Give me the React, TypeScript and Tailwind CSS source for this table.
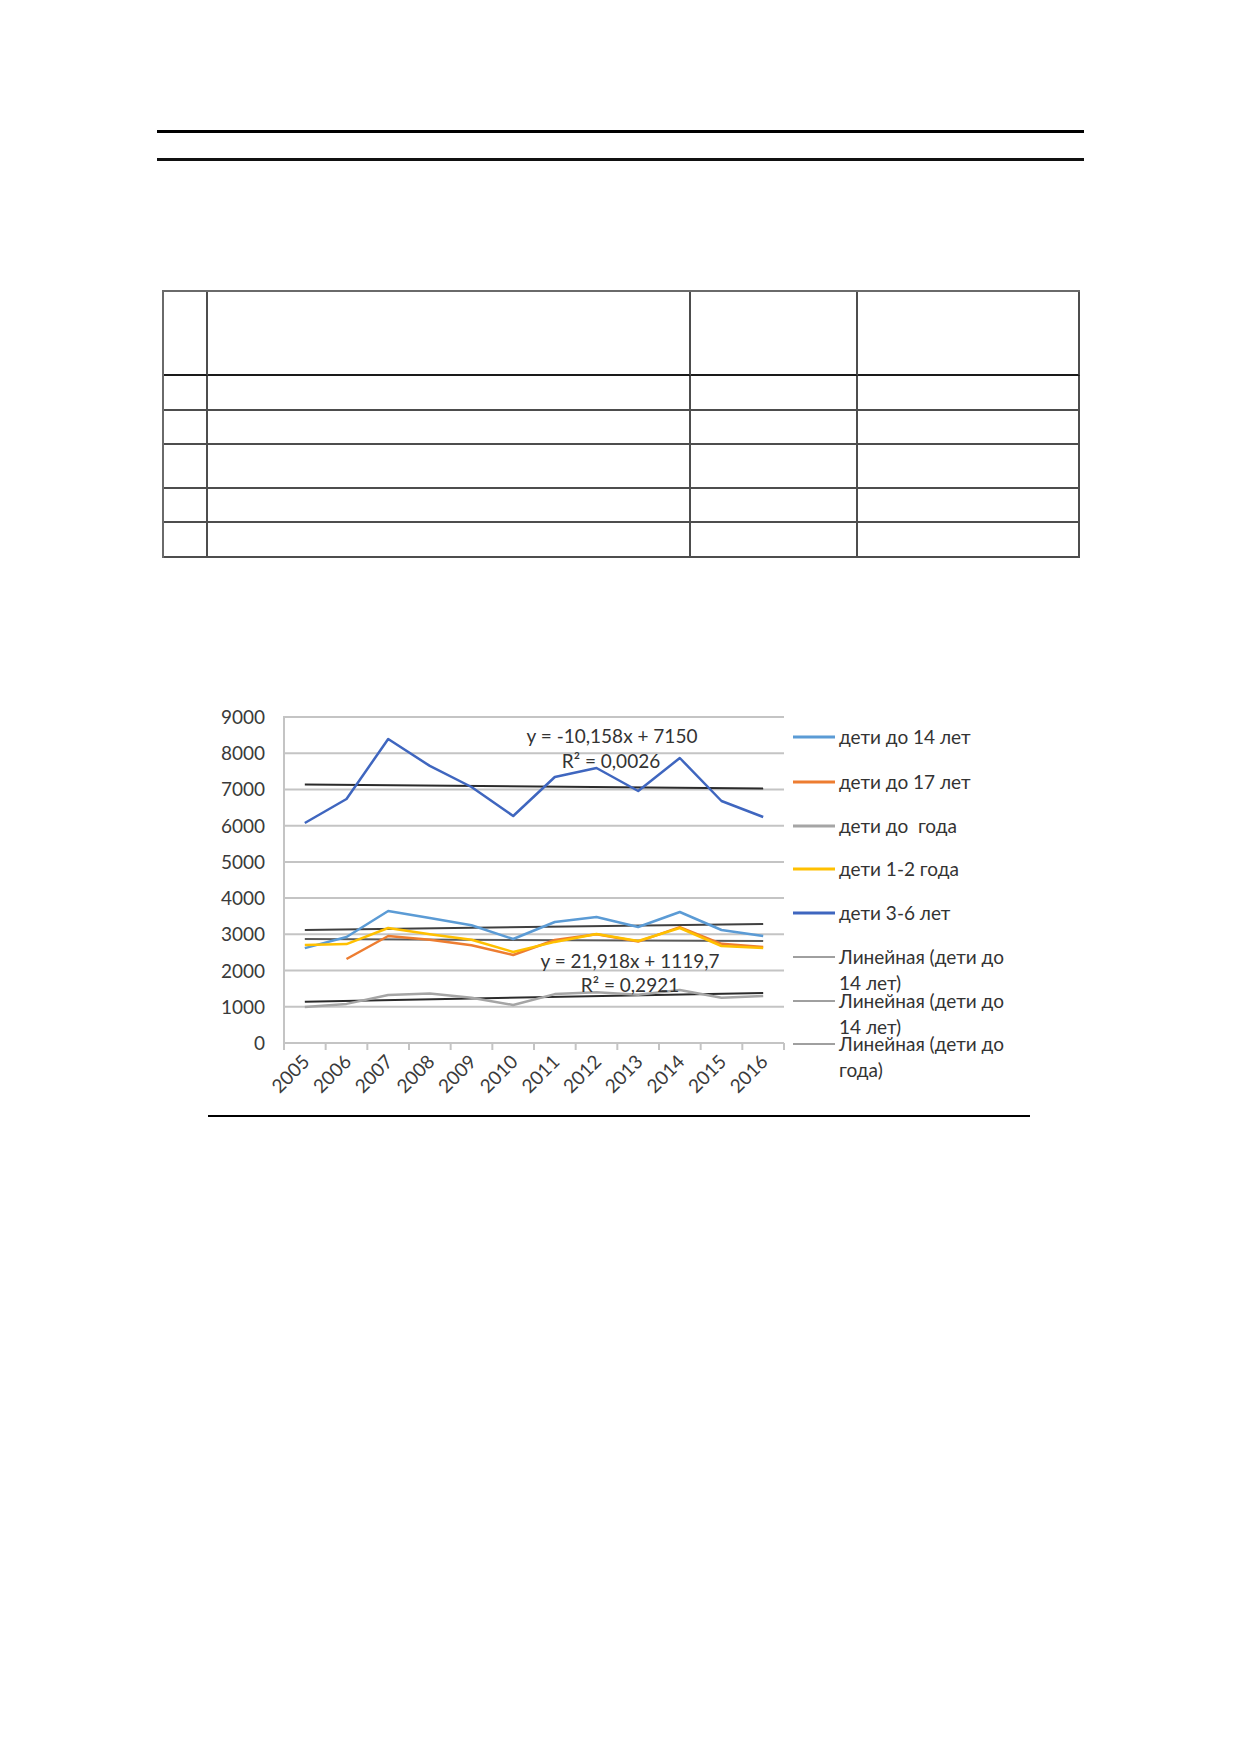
import React from "react";

const Y = (v: number) => 1043 - (v * 326) / 9000;
const X = (i: number) => 284 + (500 / 12) * (i + 0.5);
const years = ["2005","2006","2007","2008","2009","2010","2011","2012","2013","2014","2015","2016"];

const series: { color: string; w: number; data: (number | null)[] }[] = [
  { color: "#A5A5A5", w: 2.5, data: [994, 1080, 1325, 1370, 1250, 1049, 1350, 1400, 1330, 1463, 1250, 1300] },
  { color: "#5B9BD5", w: 2.5, data: [2620, 2926, 3644, 3450, 3250, 2871, 3340, 3479, 3203, 3617, 3120, 2954] },
  { color: "#ED7D31", w: 2.5, data: [null, 2319, 2954, 2850, 2700, 2430, 2844, 3000, 2800, 3200, 2740, 2650] },
  { color: "#FFC000", w: 2.5, data: [2706, 2730, 3175, 3000, 2850, 2512, 2790, 3009, 2816, 3175, 2678, 2623] },
  { color: "#3F66BF", w: 2.5, data: [6074, 6737, 8393, 7650, 7068, 6268, 7344, 7592, 6957, 7868, 6681, 6240] },
];

const trends = [
  { color: "#2b2b2b", a: 7139.8, b: 7028.1 },
  { color: "#404040", a: 3120, b: 3285 },
  { color: "#5a5a5a", a: 2871, b: 2816 },
  { color: "#2b2b2b", a: 1141.6, b: 1382.7 },
];

const pts = (d: (number | null)[]) =>
  d
    .map((v, i) => (v == null ? null : `${X(i).toFixed(1)},${Y(v).toFixed(1)}`))
    .filter(Boolean)
    .join(" ");

const legend = [
  { color: "#5B9BD5", w: 3, lines: ["дети до 14 лет"], y: 737 },
  { color: "#ED7D31", w: 3, lines: ["дети до 17 лет"], y: 782 },
  { color: "#A5A5A5", w: 3, lines: ["дети до\u00A0 года"], y: 826 },
  { color: "#FFC000", w: 3, lines: ["дети 1-2 года"], y: 869 },
  { color: "#3F66BF", w: 3, lines: ["дети 3-6 лет"], y: 913 },
  { color: "#404040", w: 1, lines: ["Линейная (дети до", "14 лет)"], y: 957 },
  { color: "#404040", w: 1, lines: ["Линейная (дети до", "14 лет)"], y: 1001 },
  { color: "#404040", w: 1, lines: ["Линейная (дети до", "года)"], y: 1044 },
];

function Chart() {
  const font = "Lato, 'Open Sans', sans-serif";
  const fs = 19;
  return (
    <svg width={870} height={412} viewBox="190 700 870 412" className="block ml-[190px]" style={{ fontFamily: font }}>
      {Array.from({ length: 10 }, (_, k) => (
        <line key={k} x1={284} x2={784} y1={Y(k * 1000)} y2={Y(k * 1000)} stroke="#C4C4C4" strokeWidth={2} />
      ))}
      <line x1={284} x2={284} y1={716} y2={1050} stroke="#C4C4C4" strokeWidth={2} />
      {Array.from({ length: 13 }, (_, k) => (
        <line key={k} x1={284 + (500 / 12) * k} x2={284 + (500 / 12) * k} y1={1043} y2={1050} stroke="#C4C4C4" strokeWidth={2} />
      ))}
      {Array.from({ length: 10 }, (_, k) => (
        <text key={k} x={265} y={Y(k * 1000) + 7} textAnchor="end" fontSize={fs} fill="#3a3a3a">
          {k * 1000}
        </text>
      ))}
      {years.map((yr, i) => (
        <text
          key={yr}
          x={X(i) + 6}
          y={1063}
          textAnchor="end"
          fontSize={fs}
          fill="#3a3a3a"
          transform={`rotate(-45 ${X(i) + 6} 1063)`}
        >
          {yr}
        </text>
      ))}
      {trends.map((t, k) => (
        <line key={k} x1={X(0)} x2={X(11)} y1={Y(t.a)} y2={Y(t.b)} stroke={t.color} strokeWidth={2} />
      ))}
      {series.map((s, k) => (
        <polyline key={k} points={pts(s.data)} fill="none" stroke={s.color} strokeWidth={s.w} strokeLinejoin="round" />
      ))}
      <text x={612} y={743} textAnchor="middle" fontSize={fs} fill="#333333">y = -10,158x + 7150</text>
      <text x={611} y={768} textAnchor="middle" fontSize={fs} fill="#333333">R² = 0,0026</text>
      <text x={630} y={968} textAnchor="middle" fontSize={fs} fill="#333333">y = 21,918x + 1119,7</text>
      <text x={630} y={992} textAnchor="middle" fontSize={fs} fill="#333333">R² = 0,2921</text>
      {legend.map((l, k) => (
        <g key={k}>
          <line x1={793} x2={835} y1={l.y} y2={l.y} stroke={l.color} strokeWidth={l.w} />
          {l.lines.map((t, j) => (
            <text key={j} x={839} y={l.y + 7 + j * 26} fontSize={fs} fill="#333333">
              {t}
            </text>
          ))}
        </g>
      ))}
    </svg>
  );
}

export default function App() {
  const cell = "border-r-2 border-b-2 border-[#4d4d4d]";
  const head = "border-r-2 border-b-2 border-[#4d4d4d] border-b-[#1a1a1a]";
  const rows = [35, 34, 44, 34, 35];
  return (
    <div className="w-[1239px] h-[1752px] bg-white pt-[130px]">
      <div className="ml-[157px] w-[927px]">
        <div className="h-[3px] bg-black" />
        <div className="mt-[25px] h-[3px] bg-[#111]" />
      </div>
      <div className="mt-[129px] ml-[162px] w-[918px] border-l-2 border-t-2 border-[#6a6a6a]">
        <div className="grid grid-cols-[44px_483px_167px_222px] h-[84px]">
          <div className={head} />
          <div className={head} />
          <div className={head} />
          <div className={head} />
        </div>
        {rows.map((h, i) => (
          <div key={i} className="grid grid-cols-[44px_483px_167px_222px]" style={{ height: h }}>
            <div className={cell} />
            <div className={cell} />
            <div className={cell} />
            <div className={cell} />
          </div>
        ))}
      </div>
      <div className="mt-[142px]">
        <Chart />
      </div>
      <div className="mt-[3px] ml-[208px] w-[822px] h-[2px] bg-black" />
    </div>
  );
}
